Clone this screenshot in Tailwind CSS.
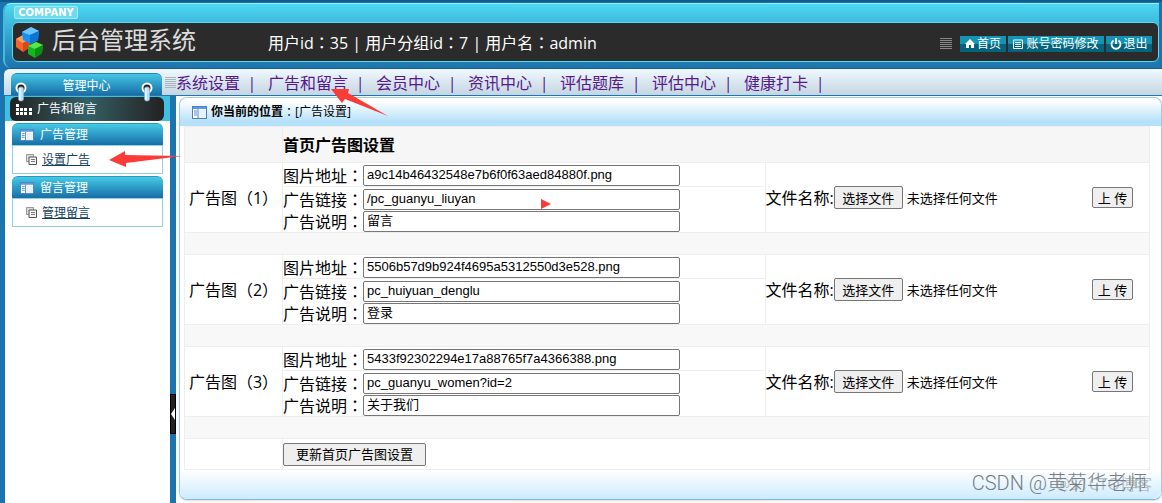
<!DOCTYPE html>
<html lang="zh-CN">
<head>
<meta charset="utf-8">
<title>后台管理系统</title>
<script src="https://cdn.jsdelivr.net/npm/@tailwindcss/browser@4"></script>
</head>
<body class="relative flex min-h-screen flex-col overflow-x-hidden bg-[#1b74ad] font-['Open_Sans','Noto_Sans_CJK_SC',sans-serif] text-base leading-6 text-black">
<svg class="hidden" aria-hidden="true">
  <symbol id="panel" viewBox="0 0 15 13"><rect x=".5" y=".5" width="14" height="12" fill="#fff" stroke="#4a7fc4"/><path d="M1 1h13v2H1z" fill="#5b9be0"/><path d="M6 3v9" stroke="#4a7fc4"/><path d="M2 5h3M2 7h3M2 9h3" stroke="#5b8fc8"/><path d="M7 4h7v8H7z" fill="#e8f2fc"/></symbol>
  <symbol id="pages" viewBox="0 0 11 11"><path d="M.5.5h7v7h-7z" fill="#ddd" stroke="#999"/><path d="M3 3h7.500v7.500H3z" fill="#f4f4f4" stroke="#555"/><path d="M5 5.500h4M5 7.500h4" stroke="#777"/></symbol>
  <symbol id="ring" viewBox="0 0 14 20"><circle cx="7" cy="6" r="4.500" fill="#222" stroke="#fff" stroke-width="2"/><rect x="4.500" y="5" width="5" height="14" rx="2" fill="#b8dffa" stroke="#7db9e6" stroke-width=".6"/><path d="M6 6v12" stroke="#fff" stroke-width="1.200"/></symbol>
</svg>

<header class="border-t-2 border-[#0e5b91] px-[3px] pt-px">
  <div class="rounded-tl-lg rounded-bl-lg border-t border-l-2 border-[#9deaf8] border-l-[#48b9dd] bg-linear-to-b from-[#4dd8f2] from-0% via-[#3fb9dc] via-30% to-[#1c73aa] pb-[6px]">
    <div class="flex h-[18px] items-end pl-[9px]"><span class="mb-[3px] h-[13px] w-16 rounded-xs border border-[#9deaf8] bg-[#6fd9ee] text-center font-['DejaVu_Sans'] text-[10px] leading-[11px] font-bold text-white">COMPANY</span></div>
    <div class="ml-[7px] flex h-10 items-center rounded-md border border-[#58dcf2] bg-[#2b2b2b] bg-[radial-gradient(#3c3c3c_40%,transparent_50%)] bg-[size:2px_2px] pr-[6px] pl-[2px]">
      <svg class="h-[33px] w-[28px] shrink-0" viewBox="0 0 28 33"><path d="M1 13l7-4 7 4v8l-7 5-7-5z" fill="#f4662a"/><path d="M1 13l7 4 7-4-7-4z" fill="#ff9c62"/><path d="M8 17v9l7-5v-8z" fill="#d84818"/><path d="M7 6l9-5 8 4-1 9-7 4-8-4z" fill="#1593f5"/><path d="M7 6l9-5 8 4-9 4z" fill="#6cc5ff"/><path d="M15 9l9-4-1 9-8 4z" fill="#0877d4"/><path d="M13 20l8-4 7 3-1 8-7 5-7-4z" fill="#12b81e"/><path d="M13 20l8-4 7 3-8 4z" fill="#59e34c"/><path d="M20 23l8-4-1 8-7 5z" fill="#079112"/></svg>
      <h1 class="ml-[9px] w-[216px] shrink-0 pb-1 text-2xl leading-8 text-[#dddddd]">后台管理系统</h1>
      <p class="whitespace-nowrap text-white">用户id<span lang="zh-TW" class="font-['Noto_Sans_CJK_TC']">：</span>35 | 用户分组id<span lang="zh-TW" class="font-['Noto_Sans_CJK_TC']">：</span>7 | 用户名<span lang="zh-TW" class="font-['Noto_Sans_CJK_TC']">：</span>admin</p>
      <nav class="mt-1 ml-auto flex items-center gap-[2px] text-xs leading-4 whitespace-nowrap text-white">
        <svg class="mr-[6px] h-3 w-3" viewBox="0 0 12 12"><path d="M0 .5h12M0 2.500h12M0 4.500h12M0 6.500h12M0 8.500h12M0 10.500h12" stroke="#888"/></svg>
        <a href="#" class="flex h-4 w-[46px] items-center justify-center gap-[2px] bg-linear-to-b from-[#1593b4] from-50% to-[#05637b] to-50%"><svg class="h-3 w-[10px]" viewBox="0 0 10 12"><path d="M5 1L0 6h1v4h3V7h2v3h3V6h1z" fill="#fff"/></svg>首页</a>
        <a href="#" class="flex h-4 w-24 items-center justify-center gap-[3px] bg-linear-to-b from-[#1593b4] from-50% to-[#05637b] to-50%"><svg class="h-[10px] w-[10px]" viewBox="0 0 10 10"><path d="M.5 1h9v8.500h-9zM2 3.500h6M2 5.500h6M2 7.500h6" fill="none" stroke="#fff"/></svg>账号密码修改</a>
        <a href="#" class="flex h-4 w-[46px] items-center justify-center gap-px bg-linear-to-b from-[#1593b4] from-50% to-[#05637b] to-50%"><svg class="h-3 w-3" viewBox="0 0 12 12"><path d="M3.500 2.500a4.500 4.500 0 1 0 5 0M6 0v6" fill="none" stroke="#fff" stroke-width="1.800"/></svg>退出</a>
      </nav>
    </div>
  </div>
</header>

<div class="ml-1 flex h-7 rounded-tl-md border-t border-b border-[#175d8e] border-b-[#1f78b0] bg-linear-to-b from-[#f0f8fe] to-[#c5d6e2]">
  <div class="relative mt-1 ml-[7px] w-[151px] shrink-0 rounded-t-md border-t border-[#1b88b8] bg-linear-to-b from-[#46c6e4] to-[#176ea6] text-center text-xs leading-[23px] text-white">管理中心
    <svg class="absolute top-2 left-[3px] z-10 h-5 w-[14px]"><use href="#ring"/></svg>
    <svg class="absolute top-2 right-[8px] z-10 h-5 w-[14px]"><use href="#ring"/></svg>
  </div>
  <nav class="flex items-center pt-px pl-[3px] whitespace-nowrap text-[#551a8b]">
    <svg class="h-3 w-[11px]" viewBox="0 0 11 12"><path d="M0 .5h11M0 2.500h11M0 4.500h11M0 6.500h11M0 8.500h11M0 10.500h11" stroke="#aab4bc"/></svg>
    <a href="#">系统设置</a><span class="w-7 pr-1 text-center">|</span>
    <a href="#">广告和留言</a><span class="w-7 pr-1 text-center">|</span>
    <a href="#">会员中心</a><span class="w-7 pr-1 text-center">|</span>
    <a href="#">资讯中心</a><span class="w-7 pr-1 text-center">|</span>
    <a href="#">评估题库</a><span class="w-7 pr-1 text-center">|</span>
    <a href="#">评估中心</a><span class="w-7 pr-1 text-center">|</span>
    <a href="#">健康打卡</a><span class="w-7 pr-1 text-center">|</span>
  </nav>
</div>

<div class="flex grow">
  <aside class="ml-[5px] w-[165px] shrink-0 bg-white text-xs text-[#10405f]">
    <div class="bg-[#3fc0e2] pt-px pr-[6px] pl-[5px]">
      <div class="flex h-6 items-center rounded-md bg-linear-to-r from-[#222] via-[#336066] to-[#222] pl-[6px] text-white"><svg class="mr-[5px] h-3 w-4" viewBox="0 0 16 12"><path d="M0 1h3v3H0zM0 5h3v3H0zM4 5h3v3H4zM8 5h3v3H8zM13 5h3v3h-3zM0 9h3v3H0zM4 9h3v3H4zM8 9h3v3H8zM13 9h3v3h-3z" fill="#fff"/></svg>广告和留言</div>
    </div>
    <section class="mt-[2px] mr-[7px] ml-[7px]">
      <h2 class="flex h-[22px] items-center rounded-t-md border-t border-[#2699be] bg-linear-to-b from-[#46cae6] to-[#176ea6] pl-2 text-white"><svg class="mr-[6px] h-3 w-[14px]" viewBox="0 0 15 13"><use href="#panel"/></svg>广告管理</h2>
      <div class="flex h-[29px] items-center border border-[#8fd2e2] pl-[13px]"><svg class="mr-[5px] h-[11px] w-[11px]"><use href="#pages"/></svg><a href="#" class="underline">设置广告</a></div>
    </section>
    <section class="mt-[2px] mr-[7px] ml-[7px]">
      <h2 class="flex h-[22px] items-center rounded-t-md border-t border-[#2699be] bg-linear-to-b from-[#46cae6] to-[#176ea6] pl-2 text-white"><svg class="mr-[6px] h-3 w-[14px]" viewBox="0 0 15 13"><use href="#panel"/></svg>留言管理</h2>
      <div class="flex h-[29px] items-center border border-[#8fd2e2] pl-[13px]"><svg class="mr-[5px] h-[11px] w-[11px]"><use href="#pages"/></svg><a href="#" class="underline">管理留言</a></div>
    </section>
  </aside>
  <div class="flex w-[6px] shrink-0 flex-col justify-end pb-[69px]"><button aria-label="收起" class="h-10 w-[6px] border border-black bg-[#222]"><svg class="h-3 w-1" viewBox="0 0 4 8" preserveAspectRatio="none"><path d="M4 0v8L0 4z" fill="#fff"/></svg></button></div>

  <main class="min-w-0 grow bg-white pt-px pb-[3px] pl-[3px]">
    <div class="flex h-full flex-col rounded-lg border border-[#9ecbe6] border-b-[#7cb9da] shadow-sm">
      <div class="flex h-7 items-center rounded-t-lg bg-linear-to-b from-white from-10% to-[#b5e1fa] to-85% pl-3 text-xs"><svg class="mr-1 h-[13px] w-[15px]"><use href="#panel"/></svg><b>你当前的位置</b><span lang="zh-TW" class="font-['Noto_Sans_CJK_TC']">：</span>[广告设置]</div>
      <div class="pr-[11px] pl-1">
      <table class="w-full table-fixed border-collapse [&_td]:border [&_td]:border-[#eeeeee] [&_th]:border [&_th]:border-[#eeeeee] [&_input]:h-[21px] [&_input]:w-[317px] [&_input]:rounded-xs [&_input]:border [&_input]:border-[#767676] [&_input]:bg-white [&_input]:px-[3px] [&_input]:font-['Liberation_Sans','Noto_Sans_CJK_SC',sans-serif] [&_input]:text-[13px] [&_label]:w-20 [&_label]:shrink-0 [&_label]:whitespace-nowrap">
        <colgroup><col class="w-[98px]"><col class="w-1/2"><col></colgroup>
        <tbody>
        <tr class="h-9 bg-[#f6f6f6]"><td></td><th colspan="2" class="text-left font-bold">首页广告图设置</th></tr>

        <tr class="h-6"><td rowspan="2" class="text-center whitespace-nowrap">广告图<span lang="zh-TW" class="font-['Open_Sans','Noto_Sans_CJK_TC']">（1）</span></td>
          <td class="h-6 p-0"><div class="flex h-[23px] items-center pt-px"><label for="p1">图片地址<span lang="zh-TW" class="font-['Noto_Sans_CJK_TC']">：</span></label><input id="p1" value="a9c14b46432548e7b6f0f63aed84880f.png"></div></td>
          <td rowspan="2" class="p-0"><div class="flex items-center pr-4 text-[13px]"><span class="text-base">文件名称:</span><button class="h-[23px] w-[69px] rounded-xs border border-[#767676] bg-[#efefef] leading-5">选择文件</button><span class="ml-1">未选择任何文件</span><button class="ml-auto h-[21px] w-[41px] rounded-xs border border-[#767676] bg-[#efefef] leading-4">上 传</button></div></td></tr>
        <tr><td class="p-0"><div class="flex h-[23px] items-center pt-px"><label for="l1">广告链接<span lang="zh-TW" class="font-['Noto_Sans_CJK_TC']">：</span></label><input id="l1" value="/pc_guanyu_liuyan"></div><div class="flex h-[22px] items-center"><label for="d1">广告说明<span lang="zh-TW" class="font-['Noto_Sans_CJK_TC']">：</span></label><input id="d1" value="留言"></div></td></tr>
        <tr class="h-[22px] bg-[#f8f8f8]"><td colspan="3" class="p-0"></td></tr>

        <tr class="h-6"><td rowspan="2" class="text-center whitespace-nowrap">广告图<span lang="zh-TW" class="font-['Open_Sans','Noto_Sans_CJK_TC']">（2）</span></td>
          <td class="h-6 p-0"><div class="flex h-[23px] items-center pt-px"><label for="p2">图片地址<span lang="zh-TW" class="font-['Noto_Sans_CJK_TC']">：</span></label><input id="p2" value="5506b57d9b924f4695a5312550d3e528.png"></div></td>
          <td rowspan="2" class="p-0"><div class="flex items-center pr-4 text-[13px]"><span class="text-base">文件名称:</span><button class="h-[23px] w-[69px] rounded-xs border border-[#767676] bg-[#efefef] leading-5">选择文件</button><span class="ml-1">未选择任何文件</span><button class="ml-auto h-[21px] w-[41px] rounded-xs border border-[#767676] bg-[#efefef] leading-4">上 传</button></div></td></tr>
        <tr><td class="p-0"><div class="flex h-[23px] items-center pt-px"><label for="l2">广告链接<span lang="zh-TW" class="font-['Noto_Sans_CJK_TC']">：</span></label><input id="l2" value="pc_huiyuan_denglu"></div><div class="flex h-[22px] items-center"><label for="d2">广告说明<span lang="zh-TW" class="font-['Noto_Sans_CJK_TC']">：</span></label><input id="d2" value="登录"></div></td></tr>
        <tr class="h-[22px] bg-[#f8f8f8]"><td colspan="3" class="p-0"></td></tr>

        <tr class="h-6"><td rowspan="2" class="text-center whitespace-nowrap">广告图<span lang="zh-TW" class="font-['Open_Sans','Noto_Sans_CJK_TC']">（3）</span></td>
          <td class="h-6 p-0"><div class="flex h-[23px] items-center pt-px"><label for="p3">图片地址<span lang="zh-TW" class="font-['Noto_Sans_CJK_TC']">：</span></label><input id="p3" value="5433f92302294e17a88765f7a4366388.png"></div></td>
          <td rowspan="2" class="p-0"><div class="flex items-center pr-4 text-[13px]"><span class="text-base">文件名称:</span><button class="h-[23px] w-[69px] rounded-xs border border-[#767676] bg-[#efefef] leading-5">选择文件</button><span class="ml-1">未选择任何文件</span><button class="ml-auto h-[21px] w-[41px] rounded-xs border border-[#767676] bg-[#efefef] leading-4">上 传</button></div></td></tr>
        <tr><td class="p-0"><div class="flex h-[23px] items-center pt-px"><label for="l3">广告链接<span lang="zh-TW" class="font-['Noto_Sans_CJK_TC']">：</span></label><input id="l3" value="pc_guanyu_women?id=2"></div><div class="flex h-[22px] items-center"><label for="d3">广告说明<span lang="zh-TW" class="font-['Noto_Sans_CJK_TC']">：</span></label><input id="d3" value="关于我们"></div></td></tr>
        <tr class="h-[22px] bg-[#f8f8f8]"><td colspan="3" class="p-0"></td></tr>

        <tr class="h-[31px]"><td class="p-0"></td><td colspan="2" class="p-0"><button class="block h-[23px] w-[143px] rounded-xs border border-[#767676] bg-[#efefef] text-[13px] leading-5">更新首页广告图设置</button></td></tr>
        </tbody>
      </table>
      </div>
      <div class="min-h-7 grow rounded-b-lg bg-linear-to-b from-white to-[#cdebfe]"></div>
    </div>
  </main>
</div>

<svg class="pointer-events-none absolute top-[87px] left-[331px] h-[30px] w-[57px]" viewBox="0 0 57 30"><path d="M0 2l18 0-1 4 40 23-43-17-3 4z" fill="#fb3b38"/></svg>
<svg class="pointer-events-none absolute top-[151px] left-[109px] h-[17px] w-[73px]" viewBox="0 0 73 17"><path d="M0 9L16 0v4l57 1-56 7v4z" fill="#fb3b38"/></svg>
<svg class="pointer-events-none absolute top-[199px] left-[541px] h-[10px] w-[10px]" viewBox="0 0 10 10"><path d="M0 0l10 5-10 5z" fill="#fb3b38"/></svg>
<div class="pointer-events-none absolute right-[10px] bottom-[9px] text-base leading-5 text-[#b5bfc6]">@51CTO博客</div>
<div class="pointer-events-none absolute right-[15px] bottom-[8px] font-[Roboto,'Noto_Sans_CJK_SC',sans-serif] text-xl leading-6 font-light text-[#777d82]">CSDN @黄菊华老师</div>
</body>
</html>
